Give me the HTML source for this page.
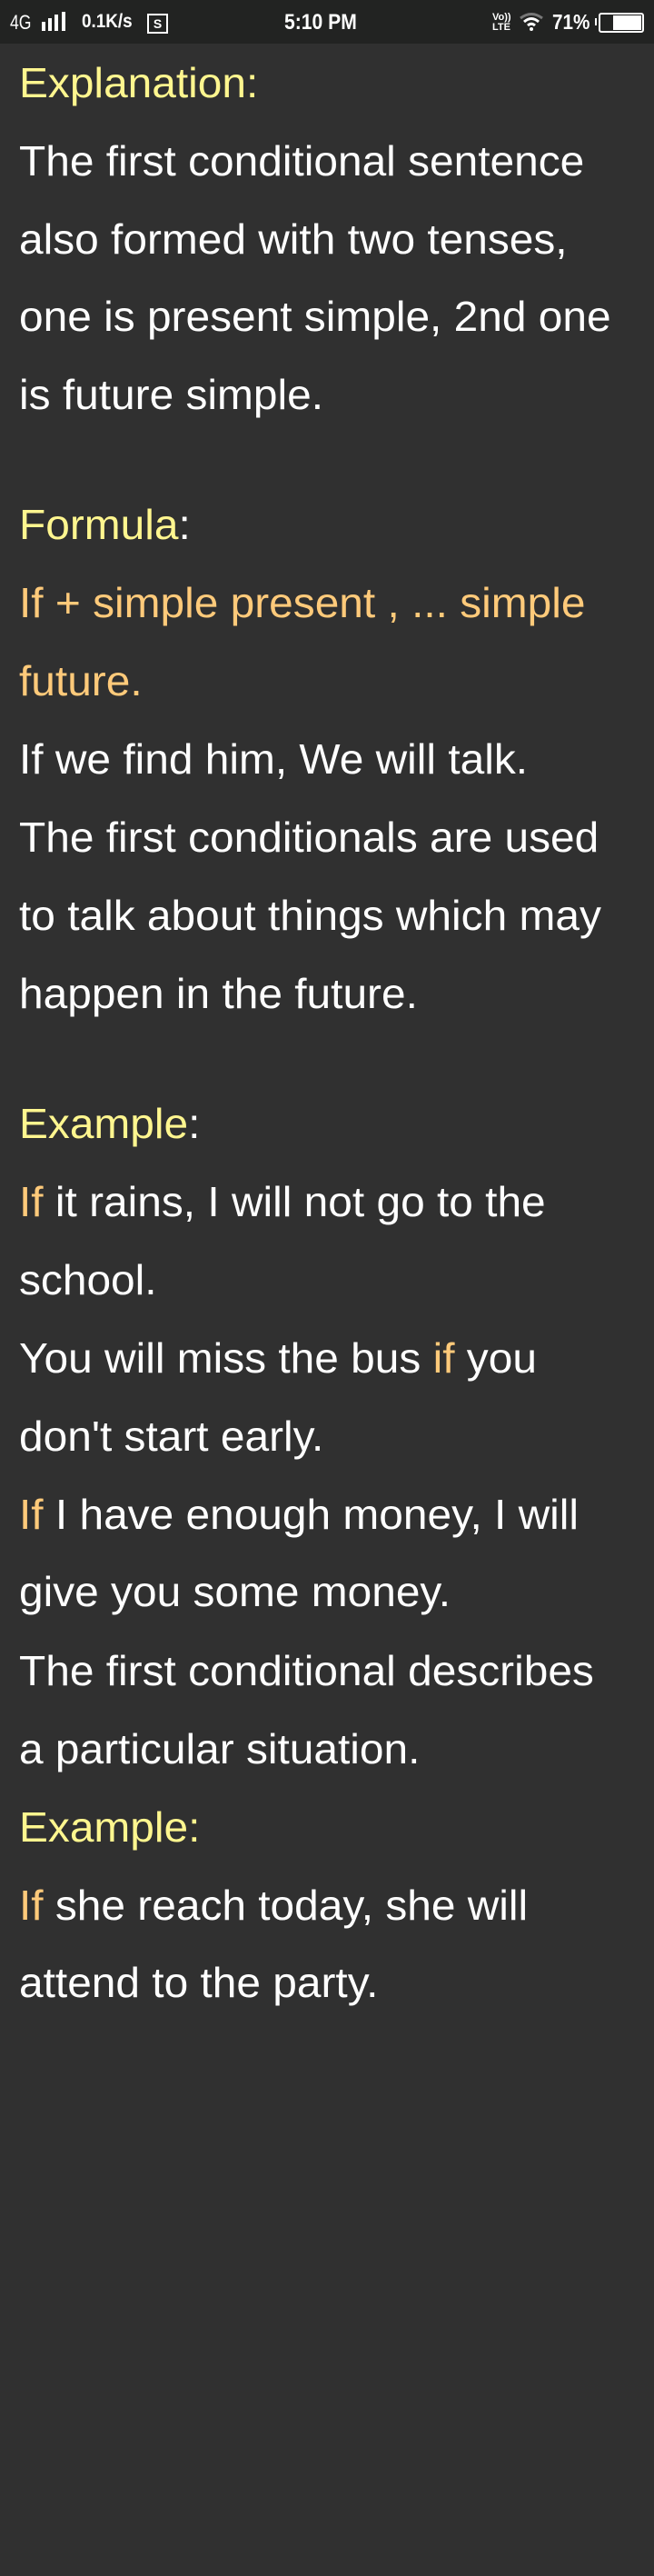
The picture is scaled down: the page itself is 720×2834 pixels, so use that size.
<!DOCTYPE html>
<html><head><meta charset="utf-8">
<style>
html,body{margin:0;padding:0;}
body{width:720px;height:2834px;background:#303030;position:relative;overflow:hidden;font-family:"Liberation Sans",sans-serif;}
.sb{position:absolute;left:0;top:0;width:720px;height:48px;background:#222322;color:#fff;font-weight:bold;}
.sb span{position:absolute;top:12px;font-size:21px;transform:scaleX(0.9);transform-origin:left;white-space:nowrap;}
.l{position:absolute;left:21px;font-size:46px;line-height:86px;height:86px;color:#fff;white-space:nowrap;transform:scaleX(1.04);transform-origin:left top;}
.y{color:#fff68f;}
.o{color:#ffca7a;}
</style></head><body>
<div class="sb">
<span style="left:11px;font-weight:normal;font-size:22px;transform:scaleX(0.8)">4G</span>
<div style="position:absolute;left:46px;top:24px;width:4px;height:10px;background:#fff"></div>
<div style="position:absolute;left:53px;top:20px;width:4px;height:14px;background:#fff"></div>
<div style="position:absolute;left:60px;top:16px;width:4px;height:18px;background:#fff"></div>
<div style="position:absolute;left:68px;top:13px;width:4px;height:21px;background:#fff"></div>
<span style="left:90px">0.1K/s</span>
<div style="position:absolute;left:162px;top:15px;width:19px;height:18px;border:2px solid #fff;font-size:14px;line-height:18px;text-align:center">S</div>
<span style="left:313px;font-size:24px;top:11px;transform:scaleX(0.88)">5:10 PM</span>
<span style="left:542px;top:14px;font-size:11px;line-height:11px;transform:none">Vo))<br>LTE</span>
<svg style="position:absolute;left:571px;top:13px" width="28" height="22" viewBox="0 0 28 22"><path d="M2 7 Q14 -2 26 7" stroke="#777" stroke-width="3" fill="none"/><path d="M6 11 Q14 4 22 11" stroke="#fff" stroke-width="3" fill="none"/><path d="M10 15 Q14 11.5 18 15" stroke="#fff" stroke-width="3" fill="none"/><circle cx="14" cy="19" r="2" fill="#fff"/></svg>
<span style="left:608px;font-size:23px;top:11px">71%</span>
<div style="position:absolute;left:655px;top:20px;width:2px;height:8px;background:#fff"></div>
<div style="position:absolute;left:659px;top:14px;width:46px;height:18px;border:2px solid #fff;border-radius:3px"><div style="position:absolute;right:1px;top:1px;width:31px;height:16px;background:#fff"></div></div>
</div>

<div class="l y" style="top:48px">Explanation:</div>
<div class="l" style="top:134px">The first conditional sentence</div>
<div class="l" style="top:220px">also formed with two tenses,</div>
<div class="l" style="top:305px">one is present simple, 2nd one</div>
<div class="l" style="top:391px">is future simple.</div>
<div class="l" style="top:534px"><span class="y">Formula</span>:</div>
<div class="l o" style="top:620px">If + simple present , ... simple</div>
<div class="l o" style="top:706px">future.</div>
<div class="l" style="top:792px">If we find him, We will talk.</div>
<div class="l" style="top:878px">The first conditionals are used</div>
<div class="l" style="top:964px">to talk about things which may</div>
<div class="l" style="top:1050px">happen in the future.</div>
<div class="l" style="top:1193px"><span class="y">Example</span>:</div>
<div class="l" style="top:1279px"><span class="o">If</span> it rains, I will not go to the</div>
<div class="l" style="top:1365px">school.</div>
<div class="l" style="top:1451px">You will miss the bus <span class="o">if</span> you</div>
<div class="l" style="top:1537px">don't start early.</div>
<div class="l" style="top:1623px"><span class="o">If</span> I have enough money, I will</div>
<div class="l" style="top:1708px">give you some money.</div>
<div class="l" style="top:1795px">The first conditional describes</div>
<div class="l" style="top:1881px">a particular situation.</div>
<div class="l y" style="top:1967px">Example:</div>
<div class="l" style="top:2053px"><span class="o">If</span> she reach today, she will</div>
<div class="l" style="top:2138px">attend to the party.</div>
</body></html>
